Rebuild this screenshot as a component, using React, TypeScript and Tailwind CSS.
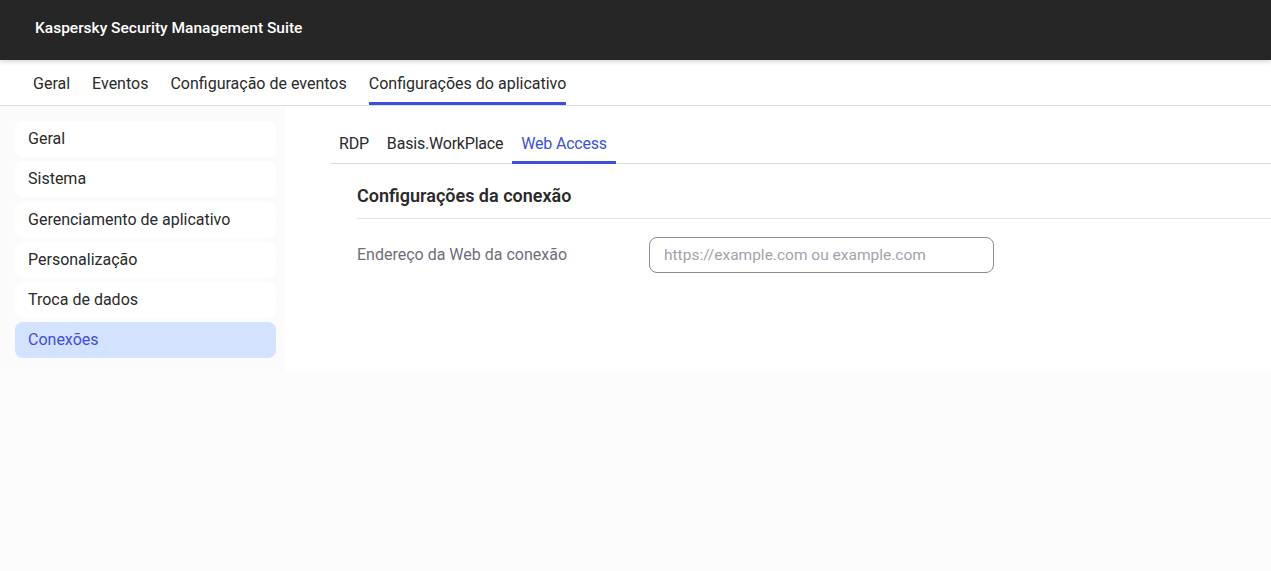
import React from "react";

export default function App() {
  const topTabs = ["Geral", "Eventos", "Configuração de eventos", "Configurações do aplicativo"];
  const side = ["Geral", "Sistema", "Gerenciamento de aplicativo", "Personalização", "Troca de dados", "Conexões"];
  const inner = ["RDP", "Basis.WorkPlace", "Web Access"];
  return (
    <div
      className="w-[1271px] h-[571px] bg-[#fcfcfc] flex flex-col overflow-hidden"
      style={{ fontFamily: "Roboto, 'Noto Sans', sans-serif" }}
    >
      <header className="h-[60px] bg-[#262626] flex items-center pl-[35px] pb-[2px] shrink-0 shadow-[0_2px_4px_rgba(0,0,0,0.15)] z-10">
        <span className="text-white text-[15.5px] font-medium">Kaspersky Security Management Suite</span>
      </header>
      <nav className="h-[46px] bg-white border-b border-[#dcdcdc] shadow-[0_1px_2px_rgba(0,0,0,0.06)] flex items-stretch pl-[33px] gap-[22px] shrink-0">
        {topTabs.map((t, i) => (
          <div
            key={t}
            className={
              "flex items-center text-[16px] text-[#2a2a2a] border-b-[3px] pt-[6px] " +
              (i === 3 ? "border-[#3d4fd4]" : "border-transparent")
            }
          >
            {t}
          </div>
        ))}
      </nav>
      <div className="flex h-[265px] bg-white shrink-0">
        <aside className="w-[285px] bg-[#fbfbfb] pl-[15px] pr-[9px] pt-[15px] flex flex-col gap-[4.3px] shrink-0">
          {side.map((s, i) => (
            <div
              key={s}
              className={
                "h-[36px] rounded-lg flex items-center pl-[13px] text-[16px] " +
                (i === 5 ? "bg-[#d3e2fe] text-[#3d4fd4]" : "bg-white text-[#2a2a2a]")
              }
            >
              {s}
            </div>
          ))}
        </aside>
        <main className="flex-1 pl-[45px] pt-[20px]">
          <div className="flex h-[38px] border-b border-[#dcdcdc] pl-[0px]">
            {inner.map((t, i) => (
              <div
                key={t}
                className={
                  "px-[9px] flex items-center text-[16px] tracking-[-0.2px] border-b-[3px] -mb-[1px] " +
                  (i === 2 ? "border-[#3d4fd4] text-[#3d4fd4]" : "border-transparent text-[#2a2a2a]")
                }
              >
                {t}
              </div>
            ))}
          </div>
          <div className="pl-[27px]">
            <div className="h-[55px] border-b border-[#e2e2e8] flex items-center pt-[8px]">
              <h2 className="text-[18px] font-semibold text-[#2a2a2a]">Configurações da conexão</h2>
            </div>
            <div className="flex items-center pt-[18px]">
              <label className="w-[292px] text-[16px] text-[#6e6e7a]">Endereço da Web da conexão</label>
              <input
                className="w-[345px] h-[36px] rounded-lg border border-[#8c8c8c] px-[14px] text-[15.5px] outline-none placeholder:text-[#a3a3ad]"
                placeholder="https://example.com ou example.com"
              />
            </div>
          </div>
        </main>
      </div>
    </div>
  );
}
